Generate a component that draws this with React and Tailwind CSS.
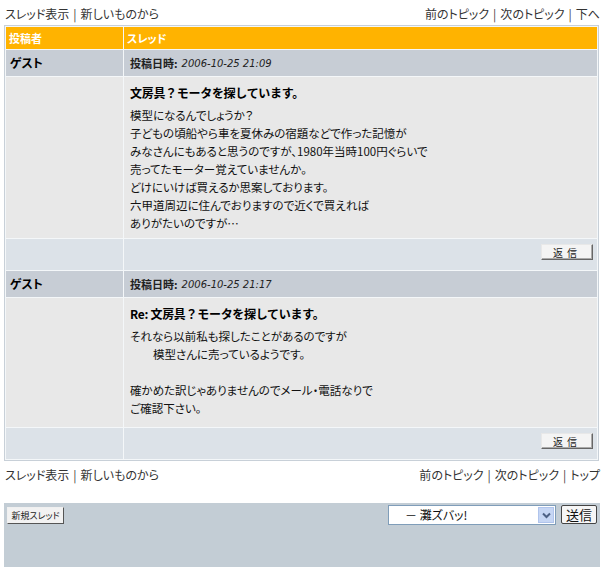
import React from 'react'

const POSTS = [
  {
    author: 'ゲスト',
    date: '2006-10-25 21:09',
    title: '文房具？モータを探しています。',
    lines: [
      '模型になるんでしょうか？',
      '子どもの頃船やら車を夏休みの宿題などで作った記憶が',
      'みなさんにもあると思うのですが、1980年当時100円ぐらいで',
      '売ってたモーター覚えていませんか。',
      'どけにいけば買えるか思案しております。',
      '六甲道周辺に住んでおりますので近くで買えれば',
      'ありがたいのですが…',
    ],
    h: 'h-[161px]',
  },
  {
    author: 'ゲスト',
    date: '2006-10-25 21:17',
    title: 'Re: 文房具？モータを探しています。',
    lines: [
      'それなら以前私も探したことがあるのですが',
      '　　模型さんに売っているようです。',
      '',
      '確かめた訳じゃありませんのでメール・電話なりで',
      'ご確認下さい。',
    ],
    h: 'h-[129px]',
  },
]

function NavBar({ last, className = '' }) {
  return (
    <div className={`flex items-center justify-between px-[5px] text-[12px] text-[#333] ${className}`}>
      <div className="flex items-center">
        <span>スレッド表示</span>
        <span className="mx-[4px] text-[#444]">|</span>
        <span>新しいものから</span>
      </div>
      <div className="flex items-center">
        <span>前のトピック</span>
        <span className="mx-[4px] text-[#444]">|</span>
        <span>次のトピック</span>
        <span className="mx-[4px] text-[#444]">|</span>
        <span>{last}</span>
      </div>
    </div>
  )
}

function ReplyButton() {
  return (
    <div className="flex h-[16px] w-[52px] items-center justify-center border border-t-[#e8e8e8] border-l-[#e8e8e8] border-r-[#666] border-b-[#666] bg-[#f4f4f4] text-[10px] tracking-[4px] text-[#222] shadow-[inset_-1px_-1px_0_#aaa]">
      返信
    </div>
  )
}

function Post({ post }) {
  return (
    <>
      {/* header row */}
      <div className="flex h-[26px] items-center bg-[#c7cdd5] pl-[4px] text-[12px] font-bold text-black">
        {post.author}
      </div>
      <div className="flex h-[26px] items-center bg-[#c7cdd5] pl-[6px] text-[11px] text-[#222]">
        <span className="font-bold">投稿日時</span>
        <span className="font-bold">:</span>
        <span className="ml-[4px] font-['DejaVu_Sans',sans-serif] text-[10px] italic">{post.date}</span>
      </div>

      {/* body */}
      <div className={`bg-[#e8e8e8] ${post.h}`} />
      <div className={`bg-[#e8e8e8] px-[6px] pt-[7px] ${post.h}`}>
        <div className="text-[12px] leading-[18px] font-bold text-black [font-feature-settings:normal] tracking-[-0.3px]">
          {post.title}
        </div>
        <div className="mt-[4px] text-[11.5px] leading-[18px] text-[#111] whitespace-pre">
          {post.lines.map((l, i) => (
            <div key={i} className="h-[18px]">{l}</div>
          ))}
        </div>
      </div>

      {/* footer */}
      <div className="h-[31px] bg-[#dce2e8]" />
      <div className="flex h-[31px] items-start justify-end bg-[#dce2e8] pr-[4px] pt-[5px]">
        <ReplyButton />
      </div>
    </>
  )
}

export default function App() {
  return (
    <div className="h-[570px] w-[605px] bg-white font-['Noto_Sans_CJK_JP',sans-serif] [font-feature-settings:'palt']">
      <NavBar last="下へ" className="h-[25px] pt-[2px]" />

      {/* thread table */}
      <div className="ml-[4px] w-[595px] border border-[#c8d0d8] bg-[#f4f7f9] p-px">
        <div className="grid grid-cols-[117px_473px] gap-px">
          <div className="flex h-[22px] items-center bg-[#ffb300] pl-[3px] text-[11px] font-bold text-white">投稿者</div>
          <div className="flex h-[22px] items-center bg-[#ffb300] pl-[3px] text-[11px] font-bold text-white">スレッド</div>
          {POSTS.map((p, i) => (
            <Post key={i} post={p} />
          ))}
        </div>
      </div>

      <NavBar last="トップ" className="h-[26px] pt-[2px]" />

      {/* bottom panel */}
      <div className="ml-[4px] mt-[16px] flex h-[64px] w-[596px] items-start justify-between bg-[#c3cdd5] px-[3px] pt-[2px]">
        <div className="mt-[2px] flex h-[17px] w-[57px] items-center justify-center border border-t-[#f0f0f0] border-l-[#f0f0f0] border-r-[#555] border-b-[#555] bg-[#f2f2f2] text-[9px] text-[#222]">
          新規スレッド
        </div>
        <div className="flex items-start gap-[5px]">
          <div className="flex h-[20px] w-[168px] items-center border border-[#7f9db9] bg-white">
            <span className="flex-1 pl-[16px] text-[12px] text-[#111]">－ 灘ズバッ!</span>
            <span className="mr-px flex h-[16px] w-[16px] items-center justify-center border border-[#b0c4ec] bg-[#c6d6f4]">
              <svg width="9" height="7" viewBox="0 0 9 7">
                <path d="M1 1.5 L4.5 5 L8 1.5" fill="none" stroke="#4d6185" strokeWidth="2" />
              </svg>
            </span>
          </div>
          <div className="flex h-[19px] w-[36px] items-center justify-center rounded-[2px] border border-[#444] bg-[#f6f6f6] text-[13px] text-[#111]">
            送信
          </div>
        </div>
      </div>
    </div>
  )
}
